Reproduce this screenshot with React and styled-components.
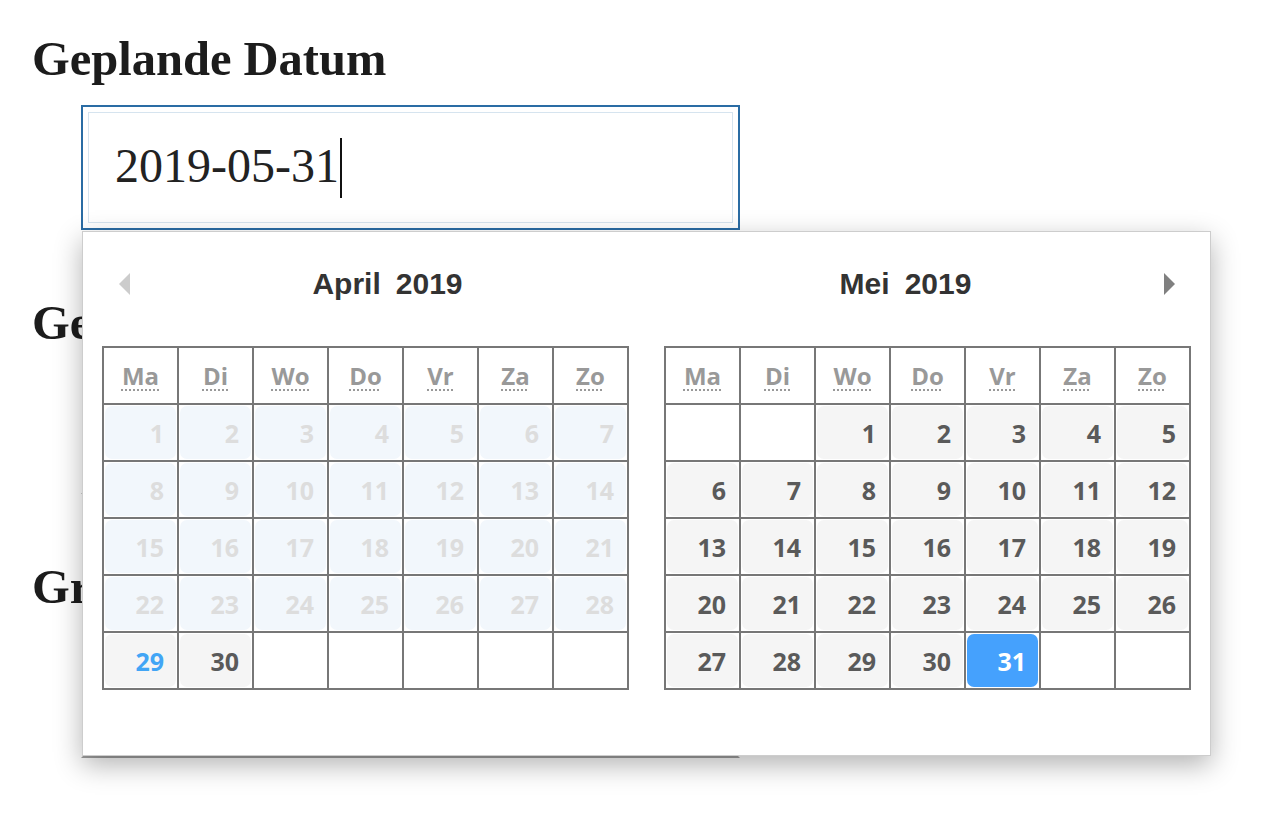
import React from 'react';
import styled, { createGlobalStyle } from 'styled-components';

const GlobalStyle = createGlobalStyle`
body {
	margin: 0;
	background: #fff;
	font-family: "Liberation Serif", "Times New Roman", serif;
}
`;

const Page = styled.div`
padding: 31px 32px;
`;

const Section = styled.section`
margin-bottom: 65px;
`;

const Heading = styled.h2`
margin: 0 0 19px;
font-size: 48.5px;
line-height: 55px;
font-weight: bold;
color: #1c1c1c;
`;

const Field = styled.div`
position: relative;
box-sizing: border-box;
margin-left: 49px;
width: 659px;
height: 125px;
padding: 5px;
border: 2px solid ${(p) => (p.$focused ? '#2a6ca4' : 'transparent')};
border-bottom-color: ${(p) => (p.$focused ? '#2a6ca4' : '#a0a0a0')};
background: #fff;
`;

const FieldInner = styled.div`
box-sizing: border-box;
height: 100%;
display: flex;
align-items: center;
padding: 0 0 4px 26px;
border: 1px solid ${(p) => (p.$focused ? '#d6e4ef' : 'transparent')};
font-size: 48px;
line-height: 1;
color: #222;
`;

const Caret = styled.span`
display: inline-block;
width: 2px;
height: 60px;
margin: 4px 0 0 1px;
background: #111;
`;

const Popup = styled.div`
position: absolute;
top: calc(100% + 3px);
left: -1px;
z-index: 10;
box-sizing: border-box;
width: 1129px;
height: 525px;
padding: 0 19px;
display: flex;
gap: 35px;
background: #fff;
border: 1px solid #cdcdcd;
box-shadow: 0 9px 26px rgba(0, 0, 0, 0.3);
font-family: "Open Sans", "DejaVu Sans", sans-serif;
`;

const Month = styled.div`
display: flex;
flex-direction: column;
`;

const MonthHeader = styled.div`
height: 104px;
margin-bottom: 10px;
display: flex;
align-items: center;
flex-direction: ${(p) => (p.$side === 'next' ? 'row-reverse' : 'row')};
`;

const ArrowButton = styled.div`
width: 44px;
height: 44px;
display: flex;
align-items: center;
justify-content: center;
cursor: pointer;
`;

const Title = styled.div`
flex: 1;
display: flex;
justify-content: center;
gap: 15px;
font-family: "Liberation Sans", Arial, sans-serif;
font-weight: bold;
font-size: 30px;
color: #333;
`;

const Grid = styled.div`
display: grid;
grid-template-columns: repeat(7, 73px);
grid-auto-rows: 55px;
gap: 2px;
padding: 2px;
background: #777;
`;

const WeekDay = styled.div`
display: flex;
align-items: center;
justify-content: center;
background: #fff;
`;

const Abbr = styled.abbr`
font-size: 24px;
font-weight: bold;
color: #999;
text-decoration: underline dotted;
text-decoration-thickness: 2px;
text-underline-offset: 4px;
cursor: help;
`;

const Cell = styled.div`
padding: 1px;
background: #fff;
`;

const dayColors = {
	disabled: { bg: '#f2f7fc', fg: '#dddddd' },
	normal: { bg: '#f5f5f5', fg: '#5a5a5a' },
	today: { bg: '#f5f5f5', fg: '#42a5f5' },
	selected: { bg: '#45a1fd', fg: '#ffffff' },
};

const Day = styled.div`
box-sizing: border-box;
height: 100%;
display: flex;
align-items: center;
justify-content: flex-end;
padding-right: 12px;
border-radius: 7px;
background: ${(p) => dayColors[p.$state].bg};
color: ${(p) => dayColors[p.$state].fg};
font-size: 25px;
font-weight: bold;
cursor: ${(p) => (p.$state === 'disabled' ? 'default' : 'pointer')};
`;

const weekDays = [
	['Ma', 'maandag'],
	['Di', 'dinsdag'],
	['Wo', 'woensdag'],
	['Do', 'donderdag'],
	['Vr', 'vrijdag'],
	['Za', 'zaterdag'],
	['Zo', 'zondag'],
];

const months = [
	{ name: 'April', year: 2019, offset: 0, days: 30, side: 'prev' },
	{ name: 'Mei', year: 2019, offset: 2, days: 31, side: 'next' },
];

const dayState = (month, day) => {
	if (month.name === 'April') {
		if (day < 29) return 'disabled';
		if (day === 29) return 'today';
		return 'normal';
	}
	if (day === 31) return 'selected';
	return 'normal';
};

const Arrow = ({ side }) => (
	<svg width="11" height="22" viewBox="0 0 11 22">
		{side === 'prev'
			? <polygon points="11,0 0,11 11,22" fill="#cccccc" />
			: <polygon points="0,0 11,11 0,22" fill="#808080" />}
	</svg>
);

const MonthView = ({ month }) => {
	const cells = [];
	for (let i = 0; i < 35; i++) {
		const day = i - month.offset + 1;
		cells.push(day >= 1 && day <= month.days ? day : null);
	}

	return (
		<Month>
			<MonthHeader $side={month.side}>
				<ArrowButton>
					<Arrow side={month.side} />
				</ArrowButton>
				<Title>
					<span>{month.name}</span>
					<span>{month.year}</span>
				</Title>
			</MonthHeader>
			<Grid>
				{weekDays.map(([short, long]) => (
					<WeekDay key={short}>
						<Abbr title={long}>{short}</Abbr>
					</WeekDay>
				))}
				{cells.map((day, i) => (
					<Cell key={i}>
						{day && <Day $state={dayState(month, day)}>{day}</Day>}
					</Cell>
				))}
			</Grid>
		</Month>
	);
};

const App = () => {
	return (
		<>
			<GlobalStyle />
			<Page>
				<Section>
					<Heading>Geplande Datum</Heading>
					<Field $focused>
						<FieldInner $focused>
							2019-05-31
							<Caret />
						</FieldInner>
						<Popup>
							{months.map((m) => (
								<MonthView key={m.name} month={m} />
							))}
						</Popup>
					</Field>
				</Section>
				<Section>
					<Heading>Geplande Tijd</Heading>
					<Field>
						<FieldInner />
					</Field>
				</Section>
				<Section>
					<Heading>Groep</Heading>
					<Field>
						<FieldInner />
					</Field>
				</Section>
			</Page>
		</>
	);
};

export default App;
